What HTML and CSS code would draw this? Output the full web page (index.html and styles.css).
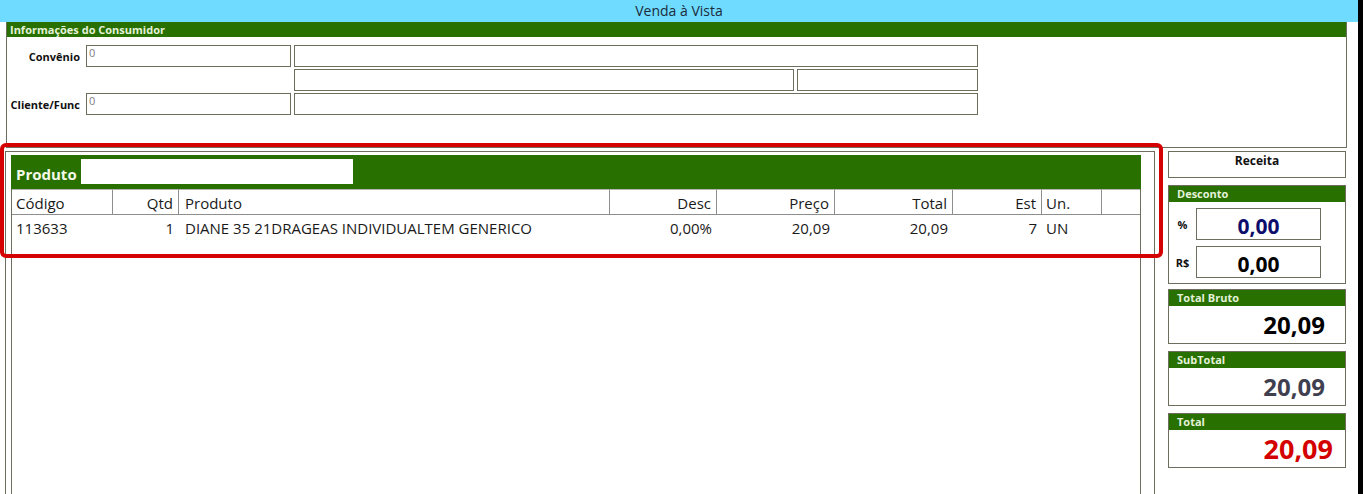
FILE: index.html
```html
<!DOCTYPE html>
<html lang="pt-BR">
  <head>
    <meta charset="UTF-8" />
    <meta name="viewport" content="width=device-width, initial-scale=1.0" />
    <title>Venda à Vista</title>
    <link rel="stylesheet" href="styles.css">
  </head>
  <body>
    <div class="window">
      <div class="titlebar">Venda à Vista</div>

      <div class="consumer">
        <div class="section-title">Informações do Consumidor</div>
        <div class="consumer-fields">
          <label class="field-label">Convênio</label>
          <div class="field">0</div>
          <div class="field"></div>

          <span></span>
          <span></span>
          <div class="field-pair">
            <div class="field field-wide"></div>
            <div class="field field-rest"></div>
          </div>

          <label class="field-label">Cliente/Func</label>
          <div class="field">0</div>
          <div class="field"></div>
        </div>
      </div>

      <div class="main">
        <div class="product-frame">
          <div class="product-panel">
            <div class="product-search">
              <span class="product-search-label">Produto</span>
              <div class="product-search-input"></div>
            </div>
            <div class="items">
              <div class="items-head">Código</div>
              <div class="items-head right">Qtd</div>
              <div class="items-head wide">Produto</div>
              <div class="items-head right">Desc</div>
              <div class="items-head right">Preço</div>
              <div class="items-head right">Total</div>
              <div class="items-head right">Est</div>
              <div class="items-head">Un.</div>
              <div class="items-head filler"></div>

              <div class="items-cell">113633</div>
              <div class="items-cell right">1</div>
              <div class="items-cell wide">DIANE 35 21DRAGEAS INDIVIDUALTEM GENERICO</div>
              <div class="items-cell right">0,00%</div>
              <div class="items-cell right">20,09</div>
              <div class="items-cell right">20,09</div>
              <div class="items-cell right">7</div>
              <div class="items-cell">UN</div>
              <div class="items-cell"></div>
            </div>
          </div>
        </div>

        <aside class="sidebar">
          <div class="receipt">Receita</div>

          <div class="box discount">
            <div class="box-title">Desconto</div>
            <div class="discount-rows">
              <span class="discount-label">%</span>
              <div class="discount-value percent">0,00</div>
              <span class="discount-label">R$</span>
              <div class="discount-value">0,00</div>
            </div>
          </div>

          <div class="box total-box gross">
            <div class="box-title">Total Bruto</div>
            <div class="total-value">20,09</div>
          </div>

          <div class="box total-box subtotal">
            <div class="box-title">SubTotal</div>
            <div class="total-value">20,09</div>
          </div>

          <div class="box total-box grand">
            <div class="box-title">Total</div>
            <div class="total-value">20,09</div>
          </div>
        </aside>
      </div>

      <div class="highlight"></div>
    </div>
  </body>
</html>
```

FILE: styles.css
```css
body {
  margin: 0;
  font-family: 'Open Sans', 'Noto Sans', sans-serif;
  color: #1a1a1a;
  background-color: #fff;
}
.window {
  position: relative;
  width: 1358px;
  height: 494px;
  border-right: 5px solid #000;
  background-color: #fff;
  display: flex;
  flex-direction: column;
  overflow: hidden;
}
.titlebar {
  height: 22px;
  line-height: 22px;
  background-color: #6fdbff;
  text-align: center;
  font-size: 14px;
  color: #1b2b3b;
}
.consumer {
  box-sizing: border-box;
  width: 1341px;
  height: 126px;
  margin-left: 6px;
  border: 1px solid #6e6e5e;
  border-top: none;
}
.section-title,
.box-title {
  background-color: #287000;
  color: #e4f2da;
  font-weight: bold;
  font-size: 11px;
}
.section-title {
  height: 15px;
  line-height: 15px;
  padding-left: 3px;
}
.consumer-fields {
  display: grid;
  grid-template-columns: 76px 205px 684px;
  grid-auto-rows: 22px;
  column-gap: 3px;
  row-gap: 2px;
  padding-top: 8px;
}
.field-label {
  align-self: center;
  text-align: right;
  padding-right: 3px;
  font-size: 11px;
  font-weight: bold;
  color: #111;
}
.field {
  box-sizing: border-box;
  border: 1px solid #6e6e5e;
  padding: 0 2px;
  font-size: 11px;
  line-height: 14px;
  color: #808080;
}
.field-pair {
  display: flex;
  gap: 3px;
}
.field-wide {
  width: 500px;
}
.field-rest {
  flex: 1;
}
.main {
  flex: 1;
  display: flex;
  margin-top: 3px;
  min-height: 0;
}
.product-frame {
  box-sizing: border-box;
  width: 1150px;
  margin-left: 5px;
  padding: 3px 13px 0 5px;
  border: 1px solid #6e6e5e;
  border-bottom: none;
  display: flex;
}
.product-panel {
  width: 1130px;
  display: flex;
  flex-direction: column;
}
.product-search {
  height: 34px;
  box-sizing: border-box;
  background-color: #287000;
  display: flex;
  align-items: flex-end;
  padding: 0 0 5px 5px;
}
.product-search-label {
  font-size: 15px;
  font-weight: bold;
  color: #f4fae9;
  line-height: 20px;
  margin-right: 4px;
}
.product-search-input {
  width: 272px;
  height: 25px;
  background-color: #fff;
}
.items {
  flex: 1;
  display: grid;
  grid-template-columns: 101px 66px 431px 107px 118px 118px 89px 60px 1fr;
  grid-template-rows: 26px 25px;
  align-content: start;
  border-left: 1px solid #6e6e5e;
  border-right: 1px solid #6e6e5e;
  font-size: 15px;
}
.items-head {
  box-sizing: border-box;
  border-top: 1px solid #b4b4b4;
  border-right: 1px solid #8e8e8e;
  border-bottom: 1px solid #8e8e8e;
  padding: 2px 4px 0;
  line-height: 22px;
  white-space: nowrap;
}
.items-head.filler {
  border-right: none;
}
.items-cell {
  padding: 0 4px;
  line-height: 26px;
  white-space: nowrap;
}
.right {
  text-align: right;
  padding-right: 5px;
}
.wide {
  padding-left: 6px;
}
.sidebar {
  width: 178px;
  margin-left: 13px;
  display: flex;
  flex-direction: column;
}
.receipt {
  box-sizing: border-box;
  height: 27px;
  border: 1px solid #6e6e5e;
  text-align: center;
  font-size: 12px;
  font-weight: bold;
  line-height: 18px;
  color: #111;
}
.box {
  border: 1px solid #6e6e5e;
}
.box-title {
  height: 16px;
  line-height: 16px;
  padding-left: 8px;
}
.discount {
  margin-top: 7px;
}
.discount-rows {
  display: grid;
  grid-template-columns: 27px 125px;
  grid-auto-rows: 32px;
  row-gap: 6px;
  padding: 6px 0 5px;
}
.discount-label {
  align-self: center;
  text-align: center;
  font-size: 11px;
  font-weight: bold;
  color: #111;
}
.discount-value {
  box-sizing: border-box;
  border: 1px solid #6e6e5e;
  text-align: center;
  font-size: 21px;
  font-weight: bold;
  line-height: 34px;
  color: #000;
}
.discount-value.percent {
  color: #0d0d6b;
}
.total-box {
  height: 53px;
}
.gross {
  margin-top: 5px;
}
.subtotal,
.grand {
  margin-top: 7px;
}
.total-value {
  height: 37px;
  line-height: 37px;
  text-align: right;
  padding-right: 20px;
  font-size: 24px;
  font-weight: bold;
  color: #000;
}
.subtotal .total-value {
  color: #3f3f4f;
}
.grand .total-value {
  color: #d40000;
  font-size: 27px;
  padding-right: 12px;
}
.highlight {
  position: absolute;
  left: 0;
  top: 143px;
  width: 1163px;
  height: 115px;
  box-sizing: border-box;
  border: 4px solid #d50000;
  border-radius: 6px;
  pointer-events: none;
}
```
